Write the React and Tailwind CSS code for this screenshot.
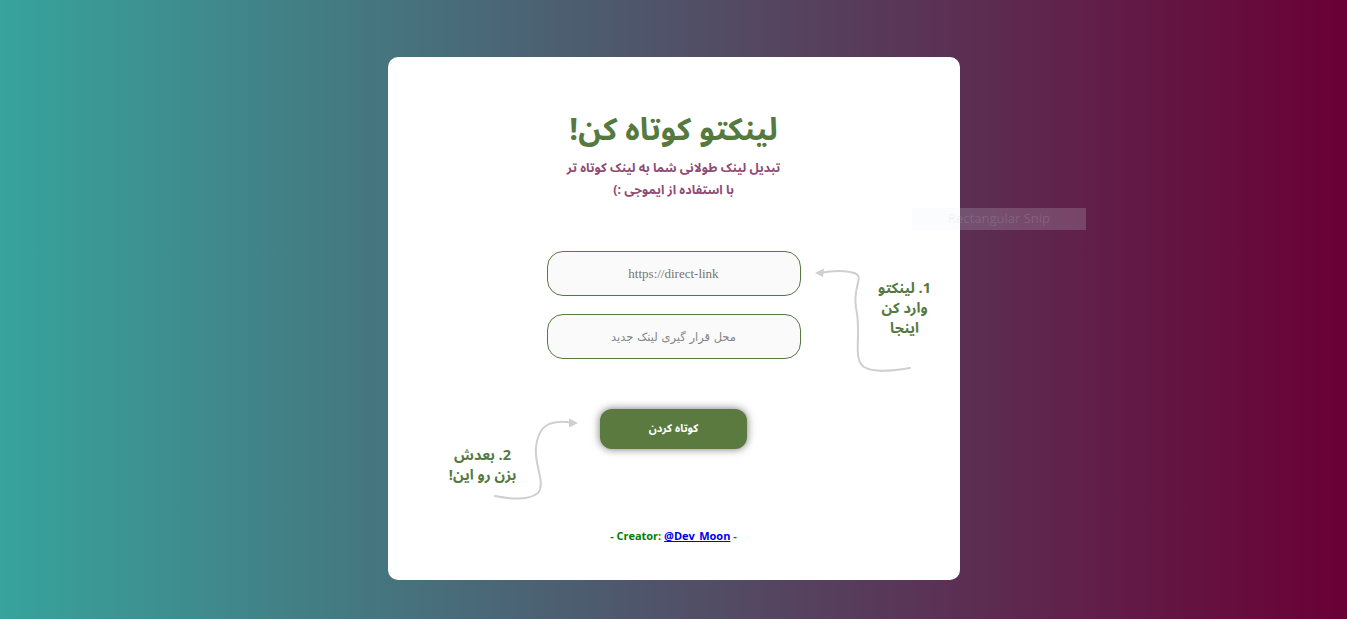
import React from 'react';

// Curvy hand-drawn arrow, pointing left (step 1)
const ArrowOne = () => (
  <svg className="absolute left-[424px] top-[206px]" width="104" height="112" viewBox="0 0 104 112" fill="none">
    <path
      d="M98 105 C 80 108, 62 110, 52 104 C 40 96, 50 70, 44 45 C 40 20, 56 12, 38 9 C 28 7, 18 8, 8 10"
      stroke="#cfcfcf"
      strokeWidth="2"
      strokeLinecap="round"
    />
    <path d="M3 10 L 12 5.5 L 11 14 Z" fill="#cfcfcf" />
  </svg>
);

// Curvy arrow pointing right (step 2)
const ArrowTwo = () => (
  <svg className="absolute left-[104px] top-[360px]" width="90" height="86" viewBox="0 0 90 86" fill="none">
    <path
      d="M3 79 C 18 82, 36 84, 46 76 C 54 66, 42 48, 44 30 C 46 12, 54 6, 66 5 C 72 4, 76 5, 80 6"
      stroke="#cfcfcf"
      strokeWidth="2"
      strokeLinecap="round"
    />
    <path d="M86 6 L 77 1.5 L 77 10.5 Z" fill="#cfcfcf" />
  </svg>
);

export default function App() {
  return (
    <div className="relative w-full min-h-[619px] bg-[linear-gradient(to_right,#37a39c,#6a0035)] pt-[57px] overflow-hidden font-['Noto_Sans_Arabic','DejaVu_Sans',sans-serif]">
      <div className="relative mx-auto w-[572px] h-[523px] bg-white rounded-[10px] flex flex-col items-center pt-[55px]" dir="rtl">
        <h1 className="text-[31px] leading-[36px] font-bold text-[#56793f]">لینکتو کوتاه کن!</h1>
        <p className="mt-[9px] text-[12.5px] leading-[22px] font-bold text-[#8e4b73] text-center">
          تبدیل لینک طولانی شما به لینک کوتاه تر
          <br />
          با استفاده از ایموجی :)
        </p>

        <div className="mt-[50px] flex flex-col gap-[18px]">
          <input
            dir="ltr"
            placeholder="https://direct-link"
            className="w-[254px] h-[45px] rounded-[16px] border border-[#56793f] bg-[#fafafa] text-center text-[13px] placeholder:text-[#757575] outline-none font-['Liberation_Serif',serif]"
          />
          <input
            placeholder="محل قرار گیری لینک جدید"
            className="w-[254px] h-[45px] rounded-[16px] border border-[#56793f] bg-[#fafafa] text-center text-[11.5px] placeholder:text-[#858585] outline-none font-['DejaVu_Sans',serif]"
          />
        </div>

        <button
          type="button"
          className="mt-[50px] w-[147px] h-[40px] rounded-[12px] bg-[#5a7a3f] text-white text-[11px] font-bold shadow-[0_0_8px_rgba(0,0,0,0.55)]"
        >
          کوتاه کردن
        </button>

        <div className="mt-[80px] text-[11px] leading-[16px] font-bold text-[#008000]" dir="ltr">
          - Creator: <a href="#" className="text-[#0000ee] underline">@Dev_Moon</a> -
        </div>

        <ArrowOne />
        <div className="absolute left-[477px] top-[222px] w-[80px] flex flex-col items-center text-[14.5px] leading-[20px] font-bold text-[#56793f]">
          <span className="h-[20px]">1. لینکتو</span>
          <span className="h-[20px]">وارد کن</span>
          <span className="h-[20px]">اینجا</span>
        </div>

        <ArrowTwo />
        <div className="absolute left-[45px] top-[389px] w-[100px] flex flex-col items-center text-[14.5px] leading-[20px] font-bold text-[#56793f]">
          <span className="h-[20px]">2. بعدش</span>
          <span className="h-[20px]">بزن رو این!</span>
        </div>
      </div>

      {/* faint snipping tooltip artifact, over the card edge */}
      <div className="absolute left-[912px] top-[208px] w-[174px] h-[22px] bg-[#e8eef8]/[0.18] flex items-center justify-center text-[13px] text-[#b8c0d0]/[0.2] font-['Open_Sans',sans-serif]">
        Rectangular Snip
      </div>
    </div>
  );
}
